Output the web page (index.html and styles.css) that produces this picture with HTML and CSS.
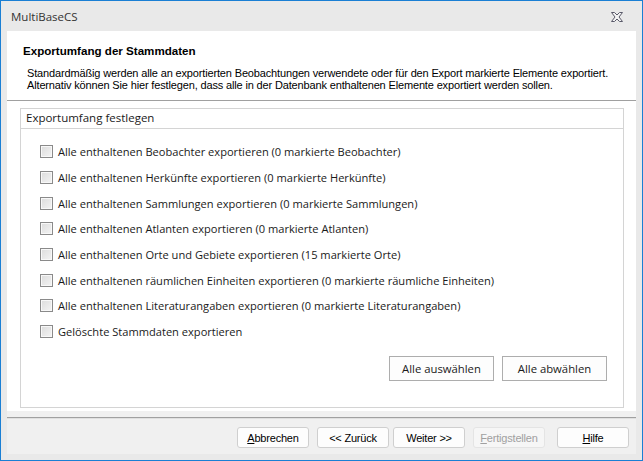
FILE: index.html
```
<!DOCTYPE html>
<html>
<head>
<meta charset="utf-8">
<link rel="stylesheet" href="styles.css">
</head>
<body>
<div class="window">
  <div class="titlebar">
    <span class="title">MultiBaseCS</span>
    <svg class="close" width="12" height="10" viewBox="0 0 12 10">
      <path d="M0.5 0.5 H3.5 L6 3 L8.5 0.5 H11.5 L8 5 L11.5 9.5 H8.5 L6 7 L3.5 9.5 H0.5 L4 5 Z" fill="#f4f4f4" stroke="#5a5a6a" stroke-width="1"/>
    </svg>
  </div>
  <div class="client">
    <div class="header">
      <div class="h-title">Exportumfang der Stammdaten</div>
      <div class="h-desc">Standardmäßig werden alle an exportierten Beobachtungen verwendete oder für den Export markierte Elemente exportiert.<br>Alternativ können Sie hier festlegen, dass alle in der Datenbank enthaltenen Elemente exportiert werden sollen.</div>
    </div>
    <div class="body">
      <div class="group">
        <div class="group-title">Exportumfang festlegen</div>
        <div class="group-content">
          <label class="row"><span class="cb"></span>Alle enthaltenen Beobachter exportieren (0 markierte Beobachter)</label>
          <label class="row"><span class="cb"></span>Alle enthaltenen Herkünfte exportieren (0 markierte Herkünfte)</label>
          <label class="row"><span class="cb"></span>Alle enthaltenen Sammlungen exportieren (0 markierte Sammlungen)</label>
          <label class="row"><span class="cb"></span>Alle enthaltenen Atlanten exportieren (0 markierte Atlanten)</label>
          <label class="row"><span class="cb"></span>Alle enthaltenen Orte und Gebiete exportieren (15 markierte Orte)</label>
          <label class="row"><span class="cb"></span>Alle enthaltenen räumlichen Einheiten exportieren (0 markierte räumliche Einheiten)</label>
          <label class="row"><span class="cb"></span>Alle enthaltenen Literaturangaben exportieren (0 markierte Literaturangaben)</label>
          <label class="row"><span class="cb"></span>Gelöschte Stammdaten exportieren</label>
          <div class="sel-buttons">
            <button class="btn-flat">Alle auswählen</button>
            <button class="btn-flat">Alle abwählen</button>
          </div>
        </div>
      </div>
    </div>
    <div class="separator"></div>
    <div class="footer">
      <button class="btn"><u>A</u>bbrechen</button>
      <button class="btn gap-s">&lt;&lt; Zurück</button>
      <button class="btn gap-s2">Weiter &gt;&gt;</button>
      <button class="btn disabled"><u>F</u>ertigstellen</button>
      <button class="btn gap-l"><u>H</u>ilfe</button>
    </div>
  </div>
</div>
</body>
</html>
```
FILE: styles.css
```
* { box-sizing: border-box; }
html, body { margin: 0; padding: 0; }
body { width: 643px; height: 461px; overflow: hidden; background: #e9e9e9; }

.window {
  width: 643px;
  height: 461px;
  border: 1px solid #1a7fd4;
  background: #e9e9e9;
  display: flex;
  flex-direction: column;
  padding: 0 6px 6px 6px;
}

.titlebar {
  height: 30px;
  display: flex;
  align-items: center;
  justify-content: space-between;
  padding: 0 13px 0 4px;
  flex-shrink: 0;
}
.title {
  font-family: "Open Sans", "Noto Sans", sans-serif;
  font-size: 11.5px;
  color: #333;
  margin-top: 1px;
}
.close { display: block; margin-top: 1px; }

.client {
  flex: 1;
  background: #f0f0f0;
  display: flex;
  flex-direction: column;
}

.header {
  background: #fff;
  height: 70px;
  border-bottom: 1px solid #a0a0a0;
  padding: 13px 0 0 16px;
  font-family: "Liberation Sans", Arial, sans-serif;
  font-size: 11px;
  color: #000;
  flex-shrink: 0;
}
.h-title { font-weight: bold; font-size: 11.6px; line-height: 13px; }
.h-desc { margin: 10px 0 0 4px; line-height: 12px; letter-spacing: -0.15px; }

.body {
  background: #fff;
  height: 310px;
  padding: 7px 12px 3px 13px;
  flex-shrink: 0;
}
.group {
  height: 100%;
  border: 1px solid #d4d4d4;
  display: flex;
  flex-direction: column;
}
.group-title {
  height: 20px;
  border-bottom: 1px solid #d4d4d4;
  padding: 0 0 0 5px;
  font-family: "Open Sans", "Noto Sans", sans-serif;
  font-size: 11.5px;
  line-height: 18px;
  color: #1a1a1a;
}
.group-content {
  padding: 10px 16px 0 19px;
  display: flex;
  flex-direction: column;
}
.row {
  height: 25.7px;
  display: flex;
  align-items: center;
  font-family: "Open Sans", "Noto Sans", sans-serif;
  font-size: 11.1px;
  color: #1a1a1a;
}
.cb {
  width: 13px;
  height: 13px;
  border: 1px solid #8a8a8a;
  background: linear-gradient(135deg, #dcdcdc, #f4f4f4);
  box-shadow: inset 0 0 0 1px #f8f8f8;
  margin-right: 5px;
  flex-shrink: 0;
}
.sel-buttons {
  display: flex;
  justify-content: flex-end;
  gap: 8px;
  margin-top: 11px;
}
.btn-flat {
  width: 105px;
  height: 25px;
  border: 1px solid #adadad;
  background: #fdfdfd;
  font-family: "Open Sans", "Noto Sans", sans-serif;
  font-size: 11.3px;
  color: #1a1a1a;
  padding: 0;
}

.separator {
  margin-top: 6px;
  height: 2px;
  border-top: 1px solid #a0a0a0;
  border-bottom: 1px solid #e0e0e0;
  flex-shrink: 0;
}
.footer {
  display: flex;
  justify-content: flex-end;
  padding: 8px 7px 0 0;
}
.btn {
  width: 72px;
  height: 21px;
  margin-left: 8px;
  border: 1px solid #cfcfcf;
  border-radius: 3px;
  background: #fdfdfd;
  font-family: "Liberation Sans", Arial, sans-serif;
  font-size: 11px;
  color: #000;
  padding: 0;
  letter-spacing: -0.2px;
}
.btn.gap-s2 { margin-left: 4px; }
.btn.gap-l { margin-left: 12px; }
.btn.disabled {
  color: #a0a0a0;
  border-color: #e4e4e4;
  background: #f6f6f6;
}
```
